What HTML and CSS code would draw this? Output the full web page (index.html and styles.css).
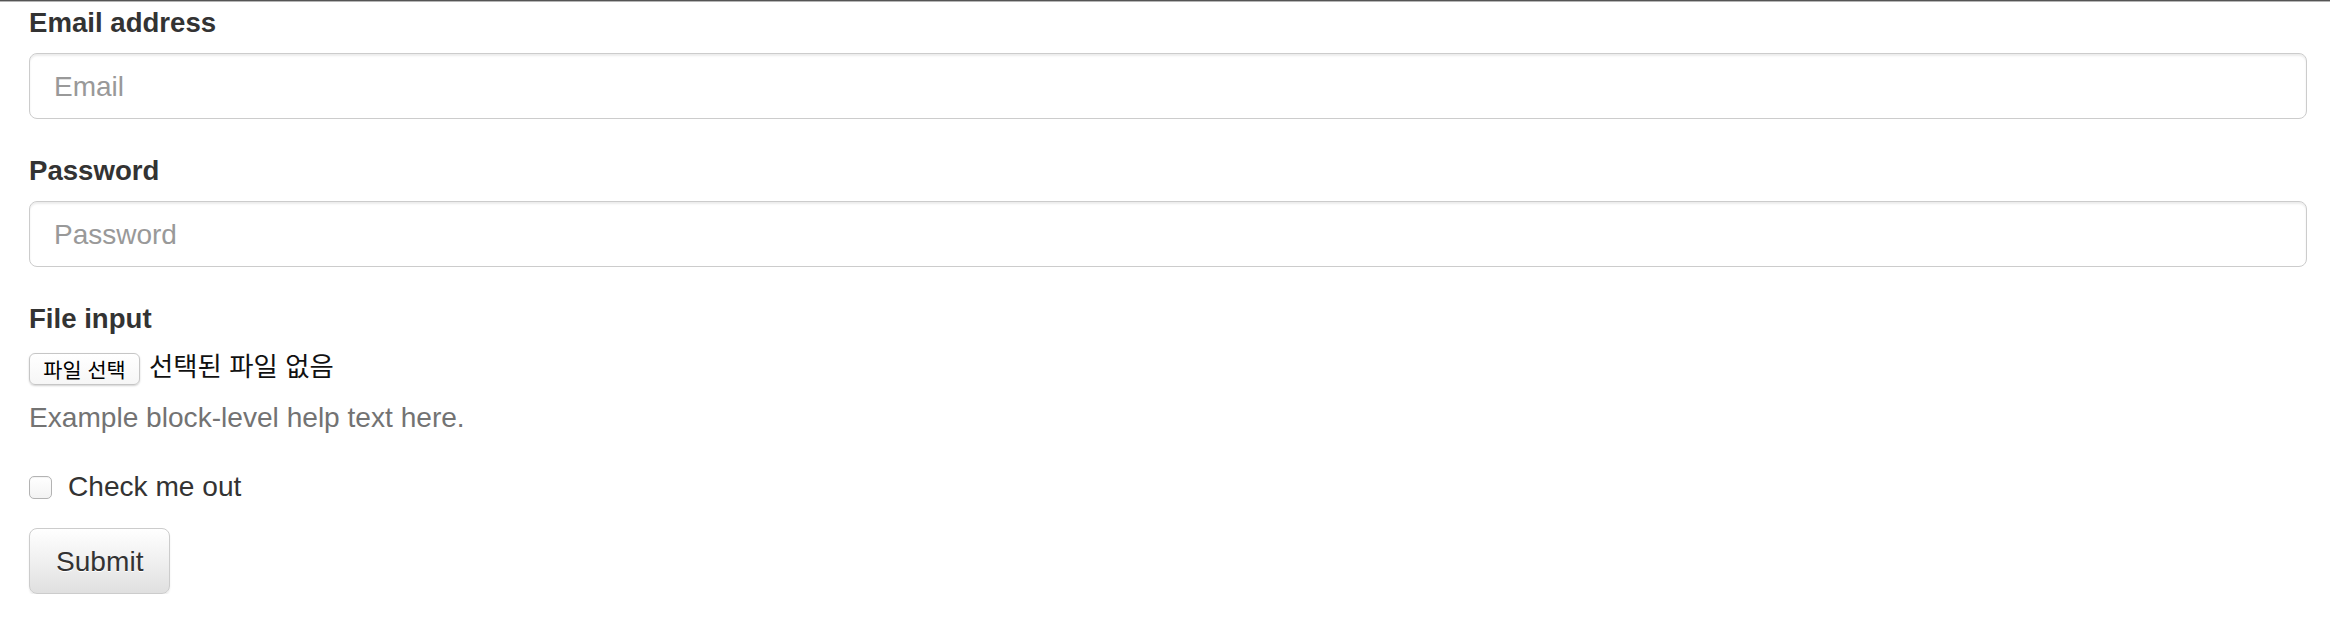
FILE: index.html
```html
<!DOCTYPE html>
<html lang="ko">
<head>
<meta charset="utf-8">
<title>Form</title>
<link rel="stylesheet" href="styles.css">
</head>
<body>
<div class="topbar"></div>
<form class="form">
  <div class="group first">
    <label class="field-label" for="email">Email address</label>
    <input class="control" id="email" type="email" placeholder="Email">
  </div>
  <div class="group">
    <label class="field-label" for="pw">Password</label>
    <input class="control" id="pw" type="password" placeholder="Password">
  </div>
  <div class="group file-group">
    <label class="field-label">File input</label>
    <div class="file-row">
      <button type="button" class="file-btn">파일 선택</button>
      <span class="file-name">선택된 파일 없음</span>
    </div>
    <p class="help">Example block-level help text here.</p>
  </div>
  <div class="check-row">
    <label class="check-label"><input type="checkbox" class="check"> Check me out</label>
  </div>
  <button type="submit" class="submit">Submit</button>
</form>
</body>
</html>
```
FILE: styles.css
```css
html, body {
  margin: 0;
  padding: 0;
  background: #fff;
}
body {
  font-family: "Liberation Sans", Arial, "Noto Sans CJK KR", sans-serif;
  font-size: 28.1px;
  line-height: 39px;
  color: #333;
}
.topbar {
  height: 1px;
  background: #555;
  border-bottom: 1px solid #b5b5b5;
}
.form {
  padding: 0 23px 0 29px;
  margin: 0;
}
.group {
  margin-bottom: 32px;
}
.group.first {
  padding-top: 1px;
}
.field-label {
  display: block;
  font-size: 27.6px;
  font-weight: bold;
  margin-bottom: 11px;
}
.control {
  display: block;
  box-sizing: border-box;
  width: 100%;
  height: 66px;
  margin: 0;
  padding: 2px 23px 0 24px;
  font-family: inherit;
  font-size: 28px;
  color: #555;
  background: #fff;
  border: 1px solid #ccc;
  border-radius: 8px;
  box-shadow: inset 0 2px 2px rgba(0, 0, 0, 0.075);
  outline: none;
}
.control::placeholder {
  color: #999;
}
.file-group {
  margin-bottom: 0;
}
.file-row {
  display: flex;
  align-items: center;
  height: 39px;
  gap: 9px;
}
.file-btn {
  box-sizing: border-box;
  height: 32px;
  width: 111px;
  padding: 0;
  margin: 0;
  font-family: "Noto Sans CJK KR", sans-serif;
  font-size: 20.8px;
  line-height: 30px;
  color: #000;
  background: linear-gradient(to bottom, #fff, #f6f6f6);
  border: 1px solid #c6c6c6;
  border-radius: 6px;
  box-shadow: 0 1px 2px rgba(0, 0, 0, 0.18);
}
.file-name {
  font-family: "Noto Sans CJK KR", sans-serif;
  font-size: 26.4px;
  line-height: 32px;
  margin-bottom: 7px;
  color: #111;
}
.help {
  margin: 10px 0 30px;
  color: #737373;
}
.check-row {
  margin-bottom: 22px;
}
.check-label {
  display: flex;
  align-items: center;
  gap: 16px;
  font-weight: normal;
}
.check {
  appearance: none;
  -webkit-appearance: none;
  box-sizing: border-box;
  width: 23px;
  height: 23px;
  margin: 2px 0 0 0;
  border: 1px solid #b3b3b3;
  border-radius: 5px;
  background: linear-gradient(to bottom, #fff, #f3f3f3);
  box-shadow: inset 0 1px 1px rgba(0, 0, 0, 0.05);
}
.submit {
  box-sizing: border-box;
  height: 66px;
  padding: 1px 26px 0;
  margin: 0;
  font-family: inherit;
  font-size: 28.1px;
  line-height: 39px;
  color: #333;
  text-shadow: 0 1px 0 #fff;
  background: linear-gradient(to bottom, #fff 0%, #e0e0e0 100%);
  border: 1px solid #ccc;
  border-radius: 8px;
  box-shadow: inset 0 1px 0 rgba(255, 255, 255, 0.15), 0 2px 2px rgba(0, 0, 0, 0.075);
}
```
